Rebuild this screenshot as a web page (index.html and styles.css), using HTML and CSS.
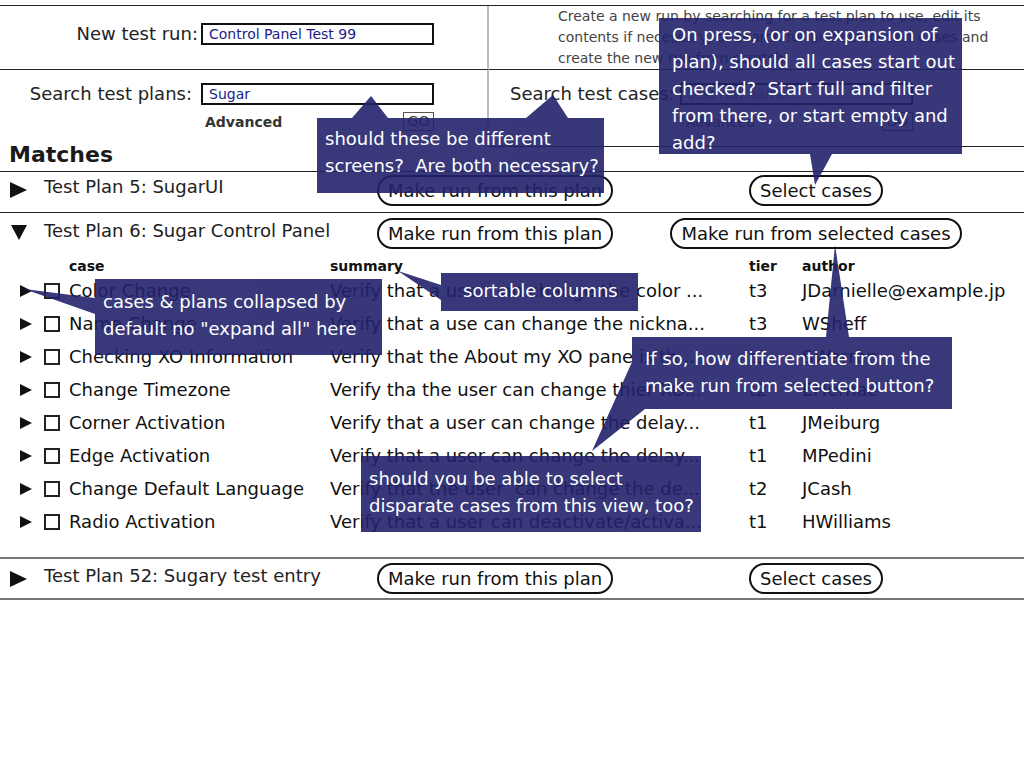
FILE: index.html
```html
<!DOCTYPE html>
<html lang="en">
<head>
    <meta charset="UTF-8">
    <meta name="viewport" content="width=device-width, initial-scale=1.0">
    <title>New Test Run</title>
    <link rel="stylesheet" href="styles.css">
</head>
<body>

    <div class="top">
        <div class="cell cell-left row-first run-cell">
            <div class="field">
                <label class="field-label run-label">New test run:</label>
                <input class="text-input" type="text" value="Control Panel Test 99">
            </div>
        </div>
        <div class="cell row-first">
            <p class="intro">Create a new run by searching for a test plan to use, edit its<br>contents if necessary, or search for and select test cases and<br>create the new run from scratch.</p>
        </div>
        <div class="cell cell-left search-cell">
            <div class="field">
                <label class="field-label plans-label">Search test plans:</label>
                <div class="field-box">
                    <input class="text-input" type="text" value="Sugar">
                    <div class="search-extra">
                        <span class="advanced">Advanced</span>
                        <span class="go">GO</span>
                    </div>
                </div>
            </div>
        </div>
        <div class="cell search-cell cases-cell">
            <div class="field">
                <label class="field-label cases-label">Search test cases:</label>
                <div class="field-box">
                    <input class="text-input" type="text" placeholder="Test run name">
                    <div class="search-extra">
                        <span class="advanced plain">Advanced</span>
                        <span class="go">GO</span>
                    </div>
                </div>
            </div>
        </div>
    </div>

    <h2 class="matches">Matches</h2>

    <div class="plan plan-first">
        <div class="plan-head">
            <span class="toggle"><svg width="17" height="16"><polygon points="0,0 17,8 0,16"/></svg></span>
            <span class="plan-title">Test Plan 5: SugarUI</span>
            <span><span class="pill">Make run from this plan</span></span>
            <span class="pill-col"><span class="pill">Select cases</span></span>
        </div>
    </div>

    <div class="plan plan-open">
        <div class="plan-head">
            <span class="toggle open"><svg width="16" height="16"><polygon points="0,0 16,0 8,15"/></svg></span>
            <span class="plan-title">Test Plan 6: Sugar Control Panel</span>
            <span><span class="pill">Make run from this plan</span></span>
            <span class="pill-col"><span class="pill">Make run from selected cases</span></span>
        </div>

        <div class="cases">
            <div class="case-head"></div>
            <div class="case-head"></div>
            <div class="case-head">case</div>
            <div class="case-head">summary</div>
            <div class="case-head">tier</div>
            <div class="case-head">author</div>

            <div class="mini"><svg width="12" height="12"><polygon points="0,0 12,6 0,12"/></svg></div>
            <div><span class="check"></span></div>
            <div>Color Change</div>
            <div>Verify that a user can change the color ...</div>
            <div>t3</div>
            <div>JDarnielle@example.jp</div>

            <div class="mini"><svg width="12" height="12"><polygon points="0,0 12,6 0,12"/></svg></div>
            <div><span class="check"></span></div>
            <div>Name Change</div>
            <div>Verify that a use can change the nickna...</div>
            <div>t3</div>
            <div>WSheff</div>

            <div class="mini"><svg width="12" height="12"><polygon points="0,0 12,6 0,12"/></svg></div>
            <div><span class="check"></span></div>
            <div>Checking XO Information</div>
            <div>Verify that the About my XO pane is th...</div>
            <div>t1</div>
            <div>SWarren</div>

            <div class="mini"><svg width="12" height="12"><polygon points="0,0 12,6 0,12"/></svg></div>
            <div><span class="check"></span></div>
            <div>Change Timezone</div>
            <div>Verify tha the user can change thier XO...</div>
            <div>t2</div>
            <div>EHernae</div>

            <div class="mini"><svg width="12" height="12"><polygon points="0,0 12,6 0,12"/></svg></div>
            <div><span class="check"></span></div>
            <div>Corner Activation</div>
            <div>Verify that a user can change the delay...</div>
            <div>t1</div>
            <div>JMeiburg</div>

            <div class="mini"><svg width="12" height="12"><polygon points="0,0 12,6 0,12"/></svg></div>
            <div><span class="check"></span></div>
            <div>Edge Activation</div>
            <div>Verify that a user can change the delay...</div>
            <div>t1</div>
            <div>MPedini</div>

            <div class="mini"><svg width="12" height="12"><polygon points="0,0 12,6 0,12"/></svg></div>
            <div><span class="check"></span></div>
            <div>Change Default Language</div>
            <div>Verify that the user&nbsp; can change the de...</div>
            <div>t2</div>
            <div>JCash</div>

            <div class="mini"><svg width="12" height="12"><polygon points="0,0 12,6 0,12"/></svg></div>
            <div><span class="check"></span></div>
            <div>Radio Activation</div>
            <div>Verify that a user can deactivate/activa...</div>
            <div>t1</div>
            <div>HWilliams</div>
        </div>
    </div>

    <div class="plan plan-last">
        <div class="plan-head">
            <span class="toggle"><svg width="17" height="16"><polygon points="0,0 17,8 0,16"/></svg></span>
            <span class="plan-title">Test Plan 52: Sugary test entry</span>
            <span><span class="pill">Make run from this plan</span></span>
            <span class="pill-col"><span class="pill">Select cases</span></span>
        </div>
    </div>

    <!-- review notes laid over the mockup -->
    <svg class="note-shapes" width="1024" height="768" viewBox="0 0 1024 768">
        <g fill="#22226b" opacity="0.9">
            <path d="M317 118H352L371 96L388 118H526L553 95L568 118H604V193H317Z"/>
            <path d="M659 18H962V154H832L815 185L810 154H659Z"/>
            <path d="M95 279H382V355H95V314L24 289L95 298Z"/>
            <path d="M441 273H638V311H441V300L398 271L441 285Z"/>
            <path d="M632 337H826L835 245L849 337H952V409H645L592 451L632 362Z"/>
            <path d="M361 456H701V532H361Z"/>
        </g>
    </svg>
    <div class="note note-screens">should these be different<br>screens?&nbsp; Are both necessary?</div>
    <div class="note note-press">On press, (or on expansion of<br>plan), should all cases start out<br>checked?&nbsp; Start full and filter<br>from there, or start empty and<br>add?</div>
    <div class="note note-collapse">cases &amp; plans collapsed by<br>default no "expand all" here</div>
    <div class="note note-sort">sortable columns</div>
    <div class="note note-differ">If so, how differentiate from the<br>make run from selected button?</div>
    <div class="note note-select">should you be able to select<br>disparate cases from this view, too?</div>

</body>
</html>
```

FILE: styles.css
```css
body {
    margin: 0;
    position: relative;
    min-height: 768px;
    font-family: "DejaVu Sans", Verdana, sans-serif;
    color: #1a1a1a;
    background-color: #fff;
}

/* top search area */
.top {
    display: grid;
    grid-template-columns: 489px 1fr;
    grid-template-rows: 64px 77px;
    margin-top: 5px;
    border-top: 1px solid #222;
}

.cell {
    box-sizing: border-box;
}

.cell-left {
    border-right: 2px solid #bbb;
}

.row-first {
    border-bottom: 1px solid #222;
}

.run-cell {
    padding-top: 17px;
}

.search-cell {
    padding-top: 13px;
}

.cases-cell {
    padding-left: 21px;
    border-bottom: 1px solid #222;
}

.field {
    display: flex;
    align-items: flex-start;
}

.field-label {
    font-size: 18px;
    line-height: 22px;
    text-align: right;
    color: #222;
}

.run-label {
    width: 198px;
    margin-right: 3px;
}

.plans-label {
    width: 192px;
    margin-right: 9px;
}

.cases-label {
    margin-right: 5px;
}

.text-input {
    display: block;
    width: 233px;
    height: 22px;
    box-sizing: border-box;
    margin: 0;
    padding: 0 6px;
    border: 2px solid #111;
    font-family: "DejaVu Sans", Verdana, sans-serif;
    font-size: 14px;
    color: #1c1c8c;
    background-color: #fff;
    outline: none;
}

.text-input::placeholder {
    color: #8a8a8a;
}

.search-extra {
    display: flex;
    justify-content: space-between;
    align-items: center;
    width: 233px;
    box-sizing: border-box;
    margin-top: 7px;
    padding-left: 4px;
}

.advanced {
    font-size: 14px;
    font-weight: bold;
    color: #333;
}

.advanced.plain {
    font-weight: normal;
    color: #555;
    padding-left: 2px;
}

.go {
    width: 31px;
    box-sizing: border-box;
    border: 1px solid #555;
    font-size: 14px;
    line-height: 17px;
    text-align: center;
    color: #444;
}

.intro {
    margin: 0;
    padding-left: 69px;
    font-size: 14px;
    line-height: 21px;
    color: #444;
    white-space: nowrap;
}

.matches {
    margin: -5px 0 0;
    padding: 0 9px 4px;
    font-size: 22px;
    line-height: 25px;
    border-bottom: 1px solid #222;
}

/* plans */
.plan {
    border-bottom: 1px solid #222;
}

.plan-open,
.plan-last {
    border-bottom: 2px solid #777;
}

.plan-head {
    display: grid;
    grid-template-columns: 44px 333px 231px 1fr;
    align-items: center;
    height: 40px;
    box-sizing: border-box;
}

.plan-first .plan-head {
    padding-bottom: 4px;
}

.plan-first .plan-title {
    padding-bottom: 6px;
}

.plan-last .plan-head {
    height: 39px;
}

.toggle {
    display: flex;
    padding-left: 10px;
}

.toggle.open {
    padding-left: 11px;
}

.toggle svg,
.mini svg {
    fill: #111;
}

.plan-title {
    font-size: 18px;
    line-height: 22px;
    padding-bottom: 5px;
    color: #222;
    white-space: nowrap;
}

.pill-col {
    display: flex;
    justify-content: center;
}

.pill {
    display: inline-block;
    padding: 0 9px;
    border: 2px solid #111;
    border-radius: 16px;
    font-size: 18px;
    line-height: 27px;
    color: #111;
    background-color: #fff;
    white-space: nowrap;
}

/* cases of an open plan */
.cases {
    display: grid;
    grid-template-columns: 24px 25px 261px 419px 53px auto;
    padding: 0 0 19px 20px;
    font-size: 18px;
    line-height: 33px;
    color: #111;
    white-space: nowrap;
}

.case-head {
    padding-top: 6px;
    font-size: 14px;
    font-weight: bold;
    line-height: 15px;
}

.mini {
    display: flex;
    align-items: center;
}

.cases > div:nth-child(6n+2) {
    display: flex;
    align-items: center;
}

.check {
    display: block;
    width: 12px;
    height: 12px;
    border: 2px solid #222;
}

/* review notes */
.note-shapes {
    position: absolute;
    top: 0;
    left: 0;
}

.note {
    position: absolute;
    font-size: 18px;
    line-height: 27px;
    color: #fff;
    white-space: nowrap;
}

.note-screens {
    left: 325px;
    top: 125px;
}

.note-press {
    left: 672px;
    top: 21px;
}

.note-collapse {
    left: 103px;
    top: 288px;
}

.note-sort {
    left: 463px;
    top: 277px;
}

.note-differ {
    left: 645px;
    top: 345px;
}

.note-select {
    left: 369px;
    top: 465px;
}
```
